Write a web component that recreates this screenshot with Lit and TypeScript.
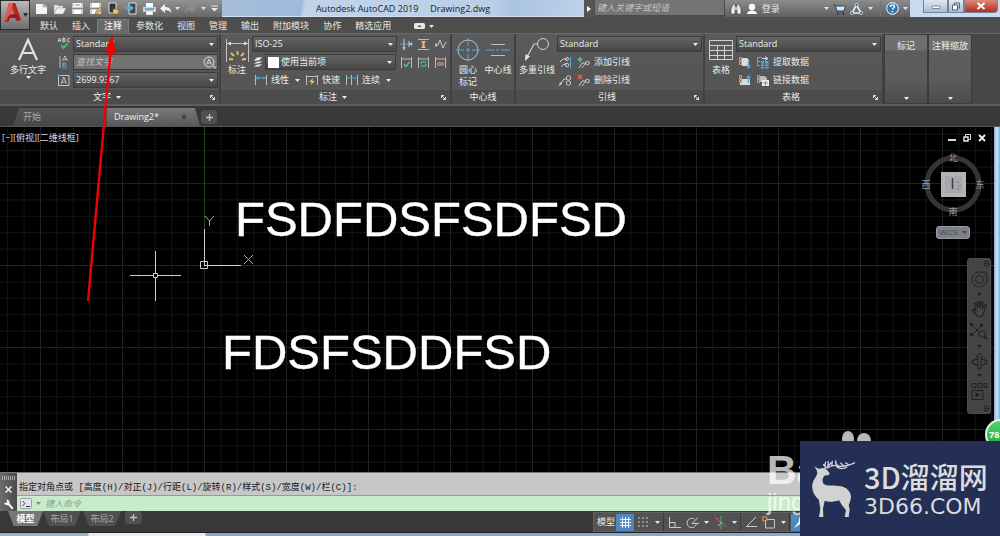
import { LitElement, html, svg, css, TemplateResult } from "lit";
import { customElement, property } from "lit/decorators.js";

type Glyph = { w: number; h: number; art: TemplateResult };

const g = (w: number, h: number, art: TemplateResult): Glyph => ({ w, h, art });

// Line art for every toolbar symbol, keyed by name.
const glyphs: Record<string, Glyph> = {
  file: g(13, 12, svg`<path d="M1 1h7l4 3v7H1z" fill="#f4f4f4"/><path d="M8 1v3h4" fill="#bbb" stroke="#999" stroke-width=".5"/>`),
  open: g(13, 12, svg`<path d="M1 11V2h4l1 1h4v2H4z" fill="#ddd"/><path d="M4 5h9l-3 6H1z" fill="#f2f2f2" stroke="#888" stroke-width=".4"/>`),
  save: g(13, 13, svg`<path d="M1 1h11v11H1z" fill="#ccc"/><path d="M3 1h7v4H3z" fill="#fff"/><path d="M3 8h7v4H3z" fill="#fff"/><path d="M4 3h5M1 6.5h11" stroke="#888"/>`),
  saveas: g(13, 13, svg`<path d="M1 1h11v11H1z" fill="#ccc"/><path d="M3 1h7v4H3zM3 8h4v4H3z" fill="#fff"/><path d="M1 6.5h11" stroke="#888"/><path d="M6 12l1-3 4-4 2 2-4 4z" fill="#e9a95c" stroke="#7c4b1e" stroke-width=".4"/>`),
  mobileopen: g(13, 13, svg`<path d="M2 1h7v10H2z" fill="#333" stroke="#ddd"/><path d="M6 12V7h3l1 1h2l-1 4z" fill="#f4c15e" stroke="#6b4a12" stroke-width=".4"/>`),
  mobilesave: g(13, 13, svg`<path d="M4 1h7v11H4z" fill="#444" stroke="#ddd"/><path d="M1 5h4V3l4 3-4 3V7H1z" fill="#45b1f0"/>`),
  print: g(13, 12, svg`<path d="M3 0h7v4H3z" fill="#fff"/><path d="M0 4h13v5H0z" fill="#cfd5da"/><path d="M2 5h9v2H2z" fill="#55b0e8"/><path d="M3 8h7v4H3z" fill="#fff" stroke="#777" stroke-width=".4"/>`),
  undo: g(13, 11, svg`<path d="M6 1v3c4 0 6 2 6.500 6C11 8 9 7 6 7v3L1 5.500z" fill="#f0f0f0"/>`),
  redo: g(13, 11, svg`<path d="M7 1v3C3 4 1 6 .500 10 2 8 4 7 7 7v3l5-4.500z" fill="#8c8c8c"/>`),
  caret: g(5, 3, svg`<path d="M0 0h5L2.500 3z" fill="currentColor"/>`),
  custom: g(7, 7, svg`<path d="M0 1h7" stroke="currentColor"/><path d="M0 3h7L3.500 6.500z" fill="currentColor"/>`),
  play: g(4, 6, svg`<path d="M0 0l4 3-4 3z" fill="#fff"/>`),
  binoc: g(12, 12, svg`<path d="M1 11V6l2-5h2v10zM11 11V6L9 1H7v10z" fill="#eee" stroke="#3a3a3a" stroke-width=".6"/><path d="M5 4h2v3H5z" fill="#ccc"/>`),
  user: g(12, 12, svg`<circle cx="6" cy="4" r="3.200" fill="#fafafa"/><path d="M1 11c0-2 2-3 4-3.500h2c2 .500 4 1.500 4 3.500z" fill="#fafafa"/>`),
  cart: g(13, 12, svg`<path d="M0 2h2l2 6h7l1.500-5H3" fill="#d7e8f5" stroke="#27425c"/><circle cx="5" cy="10.500" r="1.200" fill="#27425c"/><circle cx="10" cy="10.500" r="1.200" fill="#27425c"/>`),
  app: g(13, 12, svg`<path d="M6.500 2l4.500 8H2z" fill="none" stroke="#e3edf5" stroke-width="1.600"/><circle cx="6.500" cy="2" r="1.600" fill="#42688d" stroke="#fff" stroke-width=".6"/><circle cx="2" cy="10" r="1.600" fill="#42688d" stroke="#fff" stroke-width=".6"/><circle cx="11" cy="10" r="1.600" fill="#42688d" stroke="#fff" stroke-width=".6"/>`),
  help: g(13, 13, svg`<circle cx="6.500" cy="6.500" r="5.800" fill="#2f78bd" stroke="#fff"/><path d="M4.500 5c0-3 4-2.500 4-.5 0 1.500-2 1.500-2 3M6.500 9v1.200" fill="none" stroke="#fff" stroke-width="1.400"/>`),
  wmin: g(10, 8, svg`<path d="M1 4h8v2.500H1z" fill="#fff" stroke="#56616f" stroke-width=".7"/>`),
  wmax: g(10, 9, svg`<path d="M3.500 1h5v5h-5z" fill="none" stroke="#56616f"/><path d="M1.500 3h5v5h-5z" fill="#fff" stroke="#56616f"/>`),
  wclose: g(10, 8, svg`<path d="M1.500 1l7 6M8.500 1l-7 6" stroke="#fff" stroke-width="2"/>`),
  panelview: g(11, 6, svg`<rect width="11" height="6" rx="1.500" fill="#e6e6e6"/><path d="M3.500 4h4L5.500 2z" fill="#444"/>`),
  mtext: g(24, 26, svg`<path d="M3 23L12 3l9 20M6.500 16h11" fill="none" stroke="#e0e0e0" stroke-width="2.200"/>`),
  abc: g(14, 14, svg`<path d="M1 5l1.500-4L4 5M1.500 3.500h2M6 1v4h1.500q1.500-1 0-2H6V1h1.500q1 1 0 2M13 1.500q-3-1-3 1.500t3 1.500" fill="none" stroke="#ddd" stroke-width=".8"/><path d="M4 8l2.500 3L11 6" fill="none" stroke="#40c87a" stroke-width="1.800"/>`),
  alignab: g(10, 14, svg`<path d="M1 1v12" stroke="#bbb"/><path d="M3.500 6L6 1l2.500 5M4.500 4.500h3" fill="none" stroke="#ccc" stroke-width=".9"/><path d="M4 8v5h2.500q2-1.300 0-2.600H4V8h2q2 1 0 2.400" fill="none" stroke="#4aaeea"/>`),
  boxa: g(13, 13, svg`<path d="M1.500 2v9.500H12V1.500H3" fill="none" stroke="#c5c5c5"/><path d="M4 10l2.800-7L9.500 10M5 8h3.500" fill="none" stroke="#ccc" stroke-width=".9"/><circle cx="1.500" cy="1.500" r="1" fill="#4aaeea"/>`),
  find: g(13, 13, svg`<circle cx="6" cy="6" r="5" fill="none" stroke="#ddd"/><path d="M3.500 8.500L6 3l2.500 5.500M4.500 7h3" fill="none" stroke="#ddd" stroke-width=".9"/><path d="M10 9.500l2.500 3" stroke="#e7b46b" stroke-width="1.600"/>`),
  dim: g(25, 25, svg`<path d="M1.500 1v23M23.500 1v23M2 5.500h21" fill="none" stroke="#c2c2c2"/><path d="M2 5.500l4-2v4zM23 5.500l-4-2v4z" fill="#ddd"/><path d="M12.500 17v-4M9 18l-3-3M16 18l3-3M8 21.500l-4-.5M17 21.500l4-.5" stroke="#f1bd62" stroke-width="1.800"/>`),
  layers: g(12, 12, svg`<path d="M1 5l4-4h6L7 5zM1 8l4-3h6L7 8zM1 11l4-3h6l-4 3z" fill="#e5e5e5" stroke="#555" stroke-width=".7"/>`),
  d1: g(13, 13, svg`<path d="M0 6h13" stroke="#4aaeea"/><path d="M4 1v11M9 3v6" stroke="#ccc"/><path d="M2.500 9L4 12l1.500-3zM9 6l3-1.700v3.400z" fill="#ccc"/>`),
  d2: g(13, 13, svg`<path d="M1 1.500h11M1 11.500h11" stroke="#bbb"/><path d="M4 3h5L7.500 5v3L9 10H4l1.500-2V5z" fill="#f1bd62"/>`),
  d3: g(13, 13, svg`<path d="M1 7h3l2-5 3 8 3-6M2 5v4" fill="none" stroke="#ccc"/>`),
  d4: g(13, 13, svg`<path d="M1.500 1v11M11.500 1v11M2 3h9" stroke="#bbb"/><path d="M4 8l2 2.500L9.500 6" fill="none" stroke="#40c87a" stroke-width="1.500"/>`),
  d5: g(13, 13, svg`<path d="M1.500 1v11M11.500 1v11M2 3h9" stroke="#bbb"/><path d="M4 8c0-3 4-3 5-1M9 8c0 3-4 3-5 1" fill="none" stroke="#40c87a" stroke-width="1.200"/>`),
  d6: g(13, 13, svg`<path d="M1.500 1v11M11.500 1v11M2 3h9" stroke="#bbb"/><circle cx="5" cy="8" r="1.500" fill="none" stroke="#ec9a66"/><circle cx="8" cy="8" r="1.500" fill="none" stroke="#ec9a66"/>`),
  linear: g(12, 12, svg`<path d="M.5 1v10M11.500 1v10" stroke="#bbb"/><path d="M1 4h10" stroke="#4aaeea"/><path d="M1 4l2.500-1.500v3zM11 4L8.500 2.500v3z" fill="#4aaeea"/>`),
  quick: g(12, 12, svg`<path d="M.5 1v10M11.500 1v10M1 2.500h10" stroke="#bbb"/><path d="M7 4L3 8h2.500L5 11l4-4H6.500z" fill="#f1bd62"/>`),
  cont: g(12, 12, svg`<path d="M.5 1v10M5.500 1v10M11.500 1v10" stroke="#bbb"/><path d="M1 4h10" stroke="#4aaeea"/>`),
  cmark: g(24, 24, svg`<circle cx="12" cy="12" r="10" fill="none" stroke="#bdbdbd"/><path d="M12 0v8M12 10v4M12 16v8M0 12h8M10 12h4M16 12h8" stroke="#4aaeea"/>`),
  cline: g(24, 24, svg`<path d="M5 6.500h14M5 17.500h14" stroke="#bdbdbd"/><path d="M0 12h8M10 12h3M15 12h9" stroke="#4aaeea"/>`),
  mleader: g(26, 26, svg`<circle cx="19" cy="7" r="5.500" fill="none" stroke="#d0d0d0"/><path d="M13.500 7H10L3 20" fill="none" stroke="#d0d0d0" stroke-width="1.200"/><path d="M1 24l.5-7 4.500 2.500z" fill="#e0e0e0"/>`),
  l1: g(13, 13, svg`<path d="M1 6l3-3h4M2 11l3-3h3" fill="none" stroke="#ccc"/><circle cx="8" cy="3" r="1.500" fill="none" stroke="#ccc"/><circle cx="8" cy="9" r="1.800" fill="none" stroke="#ccc"/><path d="M11.500 1v11" stroke="#4aaeea"/>`),
  l2: g(13, 13, svg`<path d="M1 11l4-6h3" fill="none" stroke="#ccc"/><circle cx="9.500" cy="4" r="2.200" fill="none" stroke="#ccc"/><circle cx="9.500" cy="9" r="2.200" fill="none" stroke="#ccc"/><path d="M0 12l1-4 2 2z" fill="#ccc"/>`),
  ladd: g(13, 13, svg`<path d="M2 12l3-5h4M5 12l3-4" fill="none" stroke="#ccc"/><circle cx="10.500" cy="7" r="1.800" fill="none" stroke="#ccc"/><path d="M3 1v5M.5 3.500h5" stroke="#3fd473" stroke-width="1.600"/>`),
  ldel: g(13, 13, svg`<path d="M2 12l3-5h4M5 12l3-4" fill="none" stroke="#ccc"/><circle cx="10.500" cy="7" r="1.800" fill="none" stroke="#ccc"/><path d="M1 1l4 4M5 1L1 5" stroke="#f2605a" stroke-width="1.500"/>`),
  table: g(24, 22, svg`<path d="M.5 1.500h23v19H.5zM1 6.500h22M1 11.500h22M1 16.500h22M8.500 6v14M15.500 6v14" fill="none" stroke="#cfcfcf"/>`),
  t1: g(13, 13, svg`<path d="M4 2h5l2 2v6H4z" fill="#ddd"/><path d="M1.500 1.500h2v3h-2zM1.500 5.500h2v3h-2z" fill="none" stroke="#dc9c6e"/><path d="M10.500 5v6" stroke="#4aaeea" stroke-width="1.500"/><path d="M8 9.500h5L10.500 13z" fill="#4aaeea"/>`),
  t2: g(13, 13, svg`<path d="M5 5h7.500v7.500H5z" fill="#4aaeea"/><path d="M5 8h7.500M5 10.500h7.500M8.500 5v7.500" stroke="#505050" stroke-width=".8"/><path d="M1 1.500h5M1.500 1v8.500H4M1 5.500h3" fill="none" stroke="#4aaeea"/><path d="M6 2.500h5M9 .5l3 2-3 2" fill="none" stroke="#bfe0f5"/>`),
  t3: g(13, 13, svg`<path d="M4 5h8v6H2V8z" fill="#ddd"/><path d="M1.500 1.500h2v3h-2zM1.500 5.500h2v3h-2z" fill="none" stroke="#dc9c6e"/><path d="M10.500 3v6" stroke="#4aaeea" stroke-width="1.500"/><path d="M8 4h5L10.500 1z" fill="#4aaeea"/>`),
  t4: g(13, 13, svg`<path d="M4 2h5l2 2v4H4z" fill="#bbb"/><path d="M6 6h7v6H6z" fill="#eee"/><path d="M7 9h5M9.500 7v5" stroke="#777" stroke-width=".8"/><path d="M1.500 1.500h2v3h-2zM1.500 5.500h2v3h-2z" fill="none" stroke="#dc9c6e"/>`),
  launch: g(5, 5, svg`<path d="M0 .5h3M.5 0v3M1 1l3 3" stroke="#ddd" fill="none"/><path d="M5 1.500V5H1.500z" fill="#ddd"/>`),
  cross: g(6, 6, svg`<path d="M1 1l4 4M5 1L1 5" stroke="currentColor" stroke-width="1.100"/>`),
  dock: g(7, 7, svg`<path d="M.5.5l6 6M6.500.5l-6 6" stroke="currentColor" stroke-width="1.500"/>`),
  plus: g(7, 7, svg`<path d="M3.500 0v7M0 3.500h7" stroke="#c4c4c4" stroke-width="1.300"/>`),
  vmin: g(8, 8, svg`<path d="M0 6h8" stroke="#ddd" stroke-width="2"/>`),
  vmax: g(8, 8, svg`<path d="M2.500 2.500v-2h5v5h-2" fill="none" stroke="#ddd"/><path d="M1 3h4v4H1z" fill="none" stroke="#eee" stroke-width="1.400"/>`),
  vclose: g(8, 8, svg`<path d="M1 1l6 6M7 1L1 7" stroke="#eee" stroke-width="1.900"/>`),
  wheel: g(17, 17, svg`<circle cx="8.500" cy="8.500" r="7.500" fill="none" stroke="#242424"/><circle cx="8.500" cy="8.500" r="4" fill="none" stroke="#242424"/><path d="M8.500 1H16v7" fill="none" stroke="#29303c"/>`),
  hand: g(17, 18, svg`<path d="M6 16c-2-3-3-4-5-6 1-1.500 3 0 4 1L3.500 4c1-1 2 0 2.200 1L7 8l-.3-6c1-1.300 2-.5 2 .5L9 8l1.500-6c1.200-.8 1.800.2 1.500 1.200L11.200 9l2.300-4c1-.5 1.800.3 1.300 1.300L13 12l-2 4.500z" fill="none" stroke="#202020" stroke-width="1.100"/>`),
  zoomx: g(18, 18, svg`<path d="M2 2l9 9M12 2L2 12" stroke="#202020"/><path d="M0 0h3v3H0zM10 1h3v3h-3zM0 10h3v3H0z" fill="#202020"/><circle cx="12" cy="11" r="3.200" fill="#444" stroke="#202020"/><path d="M14.500 13.500L17 16" stroke="#202020" stroke-width="2"/>`),
  orbit: g(17, 17, svg`<ellipse cx="8.500" cy="9" rx="7.500" ry="3" fill="none" stroke="#202020" stroke-width="1.200"/><path d="M7 16V4H5.500L8.500 0l3 4H10v12z" fill="#444" stroke="#202020"/>`),
  motion: g(17, 19, svg`<path d="M1 1.500h4v4H1zM7 1.500h4v4H7zM13 1.500h3v4h-3zM1 8.500h11v9H1z" fill="none" stroke="#202020"/><path d="M4.500 10.500l5 2.500-5 2.500z" fill="#202020"/>`),
  ring: g(7, 7, svg`<circle cx="3.500" cy="3.500" r="2.600" fill="none" stroke="#202020"/><path d="M2 3.500h3" stroke="#202020"/>`),
  wrench: g(11, 11, svg`<path d="M1 3.500A3 3 0 0 0 5 6l4 4.500 1.500-1.500L6.500 4.500A3 3 0 0 0 3.500.5L4 3 2.800 4z" fill="#f2f2f2"/>`),
  prompt: g(12, 11, svg`<rect x=".5" y=".5" width="11" height="10" rx="1" fill="#e6e6ee" stroke="#9aa0a8"/><path d="M2.500 3l2.500 2.500L2.500 8M6 8.500h4" fill="none" stroke="#333"/>`),
  grid: g(13, 13, svg`<path d="M3.500 1v11M6.500 1v11M9.500 1v11M1 3.500h11M1 6.500h11M1 9.500h11" stroke="#fff" stroke-width=".9"/>`),
  dots: g(12, 12, svg`<path d="M1 2h2M5 2h2M9 2h2M1 6h2M5 6h2M9 6h2M1 10h2M5 10h2M9 10h2" stroke="#ccc" stroke-width="1.200"/>`),
  ortho: g(13, 13, svg`<path d="M1.500 1v10.500H13M2 6.500h5V11" fill="none" stroke="#ccc"/>`),
  polar: g(13, 13, svg`<path d="M10.500 7a4.700 4.700 0 1 1-2-3.900M6 7.500h7M6 7.500l6-6" fill="none" stroke="#ccc"/>`),
  iso: g(13, 13, svg`<path d="M1 1l11 10" stroke="#d9605a"/><path d="M7 0v13" stroke="#4fae69"/><path d="M4 10l4-4" stroke="#bbb"/>`),
  angle: g(13, 12, svg`<path d="M11 1L1.500 10.500H12" fill="none" stroke="#ccc"/>`),
  osnap: g(14, 13, svg`<path d="M3 3.500h9.500v8.500H3.500V4" fill="none" stroke="#c9c9c9"/><path d="M.8.8h4v4h-4z" fill="#555" stroke="#e29a5c"/>`),
  star: g(12, 13, svg`<path d="M6 0l1.500 6 4.500 5-4-1.500L6 8l-2 1.500L0 12l4.500-6z" fill="#fff"/>`),
};

const icon = (name: string) => {
  const i = glyphs[name];
  return html`<svg class="ico" width=${i.w} height=${i.h} viewBox="0 0 ${i.w} ${i.h}" aria-hidden="true">${i.art}</svg>`;
};

const base = css`
  * { box-sizing: border-box; }
  button, input, select, a { font: inherit; color: inherit; margin: 0; }
  button { border: 0; padding: 0; background: none; display: flex; align-items: center; justify-content: center; white-space: nowrap; }
  .ico { display: block; flex: none; }
`;

@customElement("title-bar")
class TitleBar extends LitElement {
  static styles = [base, css`
    :host { display: grid; grid-template-columns: 30px 1fr; background: #4e4e4e; color: #e6e6e6; height: 33px; }
    .logo { grid-row: 1 / 3; height: 30px; border: 1px solid #2b2b2b; background: linear-gradient(#b9b9b9, #6d6d6d); color: #333; justify-content: flex-start; }
    .bar { display: flex; height: 17px; overflow: hidden; }
    .quick { display: flex; align-items: center; width: 192px; padding-left: 3px; background: linear-gradient(#929292, #686868); }
    .quick button { width: 18px; height: 17px; }
    .quick .thin { width: 8px; }
    .quick .wide { width: 15px; }
    .caption { flex: 1; display: flex; justify-content: center; gap: 12px; background: linear-gradient(100deg, #a6bedb 0, #9fb9da 22%, #c0d3ea 23%, #b9cfe9 75%, #a9c3e1 80%, #bfd2ea); color: #1b1b1b; line-height: 17px; border-bottom: 1px solid #d5e0ee; }
    .play { width: 10px; background: #555; }
    .query { width: 131px; height: 16px; border: 1px solid #4b4b4b; border-top: 0; background: #747474; font-style: italic; padding: 0 2px; }
    .query::placeholder { color: #c3c3c3; opacity: 1; }
    .tools { display: flex; align-items: center; width: 185px; padding-left: 2px; background: linear-gradient(#8c8c8c, #5f5f5f); }
    .tools button { height: 17px; width: 18px; }
    .tools .login { width: 37px; gap: 4px; margin-right: 41px; }
    .tools .thin { width: 9px; }
    .tools .help { margin-left: 5px; border-left: 1px solid #777; width: 22px; padding-left: 4px; }
    .win { display: flex; width: 90px; padding: 0 2px 4px 13px; background: #c9dbee; }
    .win button { width: 25px; border: 1px solid #72839a; border-top: 0; background: linear-gradient(#dfe8f2, #a9bbcf); }
    .win .mid { width: 16px; }
    .win .close { width: 34px; background: linear-gradient(#dc8a7c, #b72b1b); border-radius: 0 0 4px 0; }
    .tabs { display: flex; align-items: flex-end; padding-left: 3px; height: 16px; }
    .tab { padding: 0 7px; height: 14px; line-height: 13px; text-decoration: none; white-space: nowrap; }
    .on { background: #6a6a6a; border: 1px solid #7b7b7b; border-bottom: 0; padding: 0 6px; line-height: 12px; color: #fff; }
    .view { height: 14px; gap: 4px; margin-left: 16px; }
  `];
  render() {
    const quick = [["file", "新建"], ["open", "打开"], ["save", "保存"], ["saveas", "另存为"], ["mobileopen", "从移动设备打开"], ["mobilesave", "保存到移动设备"], ["print", "打印"]];
    const tabs = ["默认", "插入", "注释", "参数化", "视图", "管理", "输出", "附加模块", "协作", "精选应用"];
    return html`
      <button class="logo" aria-label="应用程序菜单">
        <svg class="ico" width="28" height="28" viewBox="0 0 28 28">
          <path d="M3 21L8 2h6l6 17-4 1-2-5-5 1-2 5z" fill="#c62a28"/>
          <path d="M8 2h4l-2 8-3 7-4 4z" fill="#e65a50"/><path d="M11 7l2 6-4 1z" fill="#8f8f8f"/>
          <path d="M6 17l3-3 6-1 5 6-4 1-2-3-5 0-2 4z" fill="#a3191b"/><path d="M12 2h2l6 17-2 .5z" fill="#b01f20"/>
          <path d="M22 12h5l-2.500 4z" fill="#2c2c30"/>
        </svg>
      </button>
      <div class="bar">
        <div class="quick">
          ${quick.map(([i, t]) => html`<button aria-label=${t}>${icon(i)}</button>`)}
          <button class="wide" aria-label="放弃">${icon("undo")}</button><button class="thin" aria-label="放弃列表">${icon("caret")}</button>
          <button aria-label="重做">${icon("redo")}</button><button class="thin" aria-label="重做列表">${icon("caret")}</button>
          <button class="wide" aria-label="自定义">${icon("custom")}</button>
        </div>
        <div class="caption"><span>Autodesk AutoCAD 2019</span><span>Drawing2.dwg</span></div>
        <button class="play" aria-label="展开">${icon("play")}</button>
        <input class="query" type="text" aria-label="搜索" placeholder="键入关键字或短语">
        <div class="tools">
          <button aria-label="查找">${icon("binoc")}</button>
          <button class="login">${icon("user")}登录</button>
          <button class="thin" aria-label="登录菜单">${icon("caret")}</button>
          <button aria-label="商店">${icon("cart")}</button>
          <button aria-label="应用">${icon("app")}</button><button class="thin" aria-label="应用菜单">${icon("caret")}</button>
          <button class="help" aria-label="帮助">${icon("help")}</button><button class="thin" aria-label="帮助菜单">${icon("caret")}</button>
        </div>
        <div class="win">
          <button aria-label="最小化">${icon("wmin")}</button><button class="mid" aria-label="还原">${icon("wmax")}</button><button class="close" aria-label="关闭">${icon("wclose")}</button>
        </div>
      </div>
      <nav class="tabs">
        ${tabs.map((t) => html`<a href="#" class=${t === "注释" ? "tab on" : "tab"}>${t}</a>`)}
        <button class="view" aria-label="功能区显示">${icon("panelview")}${icon("caret")}</button>
      </nav>`;
  }
}

@customElement("ribbon-panel")
class RibbonPanel extends LitElement {
  @property() label = "";
  @property({ type: Boolean }) menu = false;
  @property({ type: Boolean }) launcher = false;
  static styles = [base, css`
    :host { display: flex; flex-direction: column; flex: none; background: linear-gradient(#5b5b5b, #555 60%, #5a5a5a); border-right: 2px solid #414141; }
    .body { display: flex; flex: 1; min-height: 0; padding: 2px 1px 0; }
    .foot { display: flex; align-items: center; height: 14px; padding: 0 4px; background: #4c4c4c; }
    .foot span { flex: 1; display: flex; gap: 5px; align-items: center; justify-content: center; }
  `];
  render() {
    return html`<div class="body"><slot></slot></div>
      <div class="foot"><span>${this.label}${this.menu ? icon("caret") : ""}</span>${this.launcher ? html`<button aria-label="${this.label}设置">${icon("launch")}</button>` : ""}</div>`;
  }
}

@customElement("cad-ribbon")
class CadRibbon extends LitElement {
  static styles = [base, css`
    :host { display: flex; height: 73px; background: #484848; color: #ececec; border-top: 1px solid #6a6a6a; border-bottom: 2px solid #5e5e5e; }
    .big { flex-direction: column; justify-content: flex-start; line-height: 12px; }
    .w30 { width: 30px; } .w40 { width: 40px; } .w54 { width: 54px; }
    .big .slot { display: flex; align-items: center; height: 28px; }
    .rows { display: flex; flex-direction: column; gap: 2px; }
    .row { display: flex; align-items: center; height: 16px; gap: 1px; }
    .tight { gap: 0; }
    .pick { display: flex; align-items: center; position: relative; width: 145px; height: 16px; border: 1px solid #3c3c3c; background: linear-gradient(#636363, #474747); }
    .pick.short { width: 131px; }
    .pick select { appearance: none; border: 0; background: none; width: 100%; height: 14px; padding: 0 12px 0 2px; line-height: 14px; outline: 0; }
    .pick .ico { position: absolute; right: 3px; pointer-events: none; }
    .chip { width: 11px; height: 11px; margin-left: 2px; background: #fff; flex: none; }
    .search { background: #727272; padding-right: 1px; }
    .search input { flex: 1; min-width: 0; border: 0; background: none; font-style: italic; padding: 0 2px; }
    .search input::placeholder { color: #bdbdbd; opacity: 1; }
    .search .ico { position: static; }
    .cmd { gap: 4px; height: 16px; padding: 0 2px; }
    .tight .cmd { padding: 0 3px; }
    .tool { width: 17px; height: 16px; }
    .icons { display: grid; grid-template-columns: repeat(3, 17px); grid-auto-rows: 16px; gap: 2px 0; margin-left: 1px; }
    .icons button { height: 16px; }
    .slim { width: 44px; background: linear-gradient(#6e6e6e 0, #6e6e6e 15px, #5d5d5d 16px, #5b5b5b 45px, #4c4c4c); border: 1px solid #3b3b3b; display: flex; flex-direction: column; justify-content: space-between; align-items: center; padding: 5px 0 3px; flex: none; }
  `];
  big(i: string, t: string, w: string, more: unknown = "") {
    return html`<button class="big ${w}"><span class="slot">${icon(i)}</span><span>${t}</span>${more}</button>`;
  }
  pick(label: string, value: string, cls = "pick", chip: unknown = "") {
    return html`<div class=${cls}>${chip}<select aria-label=${label}><option>${value}</option></select>${icon("caret")}</div>`;
  }
  tool(i: string, t: string) {
    return html`<button class="tool" aria-label=${t}>${icon(i)}</button>`;
  }
  render() {
    return html`
      <ribbon-panel label="文字" menu launcher>
        ${this.big("mtext", "多行文字", "w54", icon("caret"))}
        <div class="rows">
          <div class="row">${this.tool("abc", "拼写检查")}${this.pick("文字样式", "Standard")}</div>
          <div class="row">${this.tool("alignab", "对齐文字")}<div class="pick search"><input type="text" aria-label="查找文字" placeholder="查找文字"><button aria-label="查找">${icon("find")}</button></div></div>
          <div class="row">${this.tool("boxa", "注释文字")}${this.pick("文字高度", "2699.9367")}</div>
        </div>
      </ribbon-panel>
      <ribbon-panel label="标注" menu launcher>
        ${this.big("dim", "标注", "w30")}
        <div class="rows">
          <div class="row">${this.pick("标注样式", "ISO-25")}</div>
          <div class="row">${icon("layers")}${this.pick("标注图层", "使用当前项", "pick short", html`<span class="chip"></span>`)}</div>
          <div class="row tight">
            <button class="cmd">${icon("linear")}线性</button><button class="cmd" aria-label="线性菜单">${icon("caret")}</button>
            <button class="cmd">${icon("quick")}快速</button>
            <button class="cmd">${icon("cont")}连续</button><button class="cmd" aria-label="连续菜单">${icon("caret")}</button>
          </div>
        </div>
        <div class="icons">
          ${[["d1", "打断"], ["d2", "调整间距"], ["d3", "折弯"], ["d4", "检验"], ["d5", "更新"], ["d6", "重新关联"]].map(([i, t]) => html`<button aria-label=${t}>${icon(i)}</button>`)}
        </div>
      </ribbon-panel>
      <ribbon-panel label="中心线">
        ${this.big("cmark", "圆心", "w30", html`<span>标记</span>`)}
        ${this.big("cline", "中心线", "w30")}
      </ribbon-panel>
      <ribbon-panel label="引线" launcher>
        ${this.big("mleader", "多重引线", "w40")}
        <div class="rows">
          <div class="row">${this.pick("引线样式", "Standard")}</div>
          <div class="row">${this.tool("l1", "对齐")}<button class="cmd">${icon("ladd")}添加引线</button></div>
          <div class="row">${this.tool("l2", "合并")}<button class="cmd">${icon("ldel")}删除引线</button></div>
        </div>
      </ribbon-panel>
      <ribbon-panel label="表格" launcher>
        ${this.big("table", "表格", "w30")}
        <div class="rows">
          <div class="row">${this.pick("表格样式", "Standard")}</div>
          <div class="row">${this.tool("t1", "下载")}<button class="cmd">${icon("t2")}提取数据</button></div>
          <div class="row">${this.tool("t3", "上载")}<button class="cmd">${icon("t4")}链接数据</button></div>
        </div>
      </ribbon-panel>
      <button class="slim">标记${icon("caret")}</button>
      <button class="slim">注释缩放${icon("caret")}</button>`;
  }
}

@customElement("drawing-view")
class DrawingView extends LitElement {
  static styles = [base, css`
    :host { display: flex; flex: 1; min-height: 0; background: #000; color: #ccc; border-top: 1px solid #555; }
    .view { flex: 1; position: relative; overflow: hidden; }
    .sheet { position: absolute; inset: 0; width: 100%; height: 100%; }
    .edge { width: 6px; background: linear-gradient(90deg, #86a9cb, #c5dcf3 40%, #aecdeb 80%, #39b6d8); }
    .big { font: 49px "Liberation Sans", Arial, sans-serif; fill: #fff; stroke: #fff; stroke-width: .4px; }
    .mode { position: absolute; left: 2px; top: 4px; line-height: 13px; color: #d8d8d8; }
    .win { position: absolute; right: 8px; top: 7px; display: flex; gap: 7px; }
    .compass { position: absolute; right: 8px; top: 23px; width: 66px; height: 70px; }
    .dir { fill: #9c9c9c; text-anchor: middle; }
    .wcs { position: absolute; right: 24px; top: 99px; width: 34px; height: 13px; border-radius: 3px; background: #7e8087; border: 1px solid #999ba1; color: #4a4c52; font: 8px "Liberation Sans", sans-serif; gap: 4px; }
    .nav { position: absolute; right: 3px; top: 131px; width: 24px; height: 156px; border-radius: 3px; background: #444; display: flex; flex-direction: column; align-items: center; justify-content: space-between; padding: 1px 0; color: #202020; border: 1px solid #4d4d4d; }
    .nav .end { align-self: flex-end; }
  `];
  render() {
    const nav = [["wheel", "全导航控制盘"], ["caret", "控制盘菜单"], ["hand", "平移"], ["zoomx", "范围缩放"], ["caret", "缩放菜单"], ["orbit", "动态观察"], ["caret", "观察菜单"], ["motion", "ShowMotion"]];
    return html`
      <div class="view">
        <svg class="sheet">
          <defs>
            <pattern id="cells" x="204" y="138" width="82" height="82" patternUnits="userSpaceOnUse">
              <path d="M16.900 0v82M33.300 0v82M49.700 0v82M66.100 0v82M0 16.900h82M0 33.300h82M0 49.700h82M0 66.100h82" stroke="#121318"/>
              <path d="M.5 0v82M0 .5h82" stroke="#20212a"/>
            </pattern>
          </defs>
          <rect width="100%" height="100%" fill="url(#cells)"/>
          <line x1="204.500" y1="0" x2="204.500" y2="102" stroke="#1d4a1d"/>
          <line x1="240" y1="138.500" x2="100%" y2="138.500" stroke="#5a1c1f"/>
          <g fill="none" stroke="#cfcfcf">
            <path d="M204.500 102v37M204 138.500h37M200.500 134.500h7v7h-7z"/>
            <path d="M205 89l4.500 5 4.500-5M209.500 94v5M244 128l9 9M253 128l-9 9" stroke="#aaa"/>
            <path d="M155.500 124v22M155.500 151v23M130 148.500h23M158 148.500h23M153.500 146.500h4v4h-4z"/>
          </g>
          <text class="big" x="235" y="109">FSDFDSFSDFSD</text>
          <text class="big" x="222" y="242">FDSFSDDFSD</text>
        </svg>
        <div class="mode">[−][俯视][二维线框]</div>
        <div class="win"><button aria-label="最小化视图">${icon("vmin")}</button><button aria-label="还原视图">${icon("vmax")}</button><button aria-label="关闭视图">${icon("vclose")}</button></div>
        <svg class="compass" viewBox="0 0 66 70">
          <circle cx="33" cy="34" r="26" fill="none" stroke="#343434" stroke-width="5"/>
          <rect x="21" y="22" width="25" height="25" fill="#b3b3b3"/><rect x="25" y="26" width="17" height="17" fill="#a6a8ac"/>
          <path d="M32.500 28v11" stroke="#3d3f46" stroke-width="1.500"/><path d="M37 32h2M39 36h2M37 39h2" stroke="#66758c"/>
          <text class="dir" x="33" y="11">北</text><text class="dir" x="6" y="38">西</text><text class="dir" x="60" y="38">东</text><text class="dir" x="33" y="65">南</text>
        </svg>
        <button class="wcs">WCS${icon("caret")}</button>
        <div class="nav">
          <button class="end" aria-label="关闭导航栏">${icon("ring")}</button>
          ${nav.map(([i, t]) => html`<button aria-label=${t}>${icon(i)}</button>`)}
          <button class="end" aria-label="导航栏设置">${icon("ring")}</button>
        </div>
      </div>
      <div class="edge"></div>`;
  }
}

@customElement("command-line")
class CommandLine extends LitElement {
  static styles = [base, css`
    :host { display: flex; height: 39px; border-top: 1px solid #777; background: #c7c7c7; color: #161616; }
    .grip { width: 17px; background: linear-gradient(90deg, #6c6c6c, #4b4b4b); display: flex; flex-direction: column; align-items: center; justify-content: space-between; padding: 3px 0 1px; color: #f2f2f2; }
    .dots { width: 13px; height: 4px; background: repeating-linear-gradient(90deg, #aaa 0 1px, transparent 1px 2px); }
    .text { flex: 1; display: flex; flex-direction: column; }
    .log { flex: 1; display: flex; align-items: flex-end; padding: 0 2px; line-height: 13px; font-family: "Liberation Mono", "Noto Sans CJK SC", monospace; }
    .entry { display: flex; align-items: center; height: 16px; border-top: 1px solid #999; background: #c8ebcb; padding-left: 3px; gap: 4px; color: #7b8b7d; }
    .entry input { flex: 1; border: 0; background: none; outline: 0; padding: 0; font-style: italic; }
    .entry input::placeholder { color: #8ba18d; opacity: 1; }
  `];
  render() {
    return html`
      <div class="grip"><span class="dots"></span><button aria-label="关闭">${icon("dock")}</button><button aria-label="自定义">${icon("wrench")}</button></div>
      <div class="text">
        <div class="log">指定对角点或 [高度(H)/对正(J)/行距(L)/旋转(R)/样式(S)/宽度(W)/栏(C)]:</div>
        <div class="entry"><button aria-label="最近的命令">${icon("prompt")}</button>${icon("caret")}<input type="text" aria-label="命令" placeholder="键入命令"></div>
      </div>`;
  }
}

@customElement("status-strip")
class StatusStrip extends LitElement {
  static styles = [base, css`
    :host { display: flex; height: 22px; background: #383838; color: #a8a8a8; border-bottom: 1px solid #222; }
    .sheets { display: flex; padding-left: 8px; }
    .sheet { height: 15px; width: 38px; background: #505050; clip-path: polygon(0 0, 100% 0, 84% 100%, 16% 100%); }
    .on { width: 35px; background: #777; color: #fff; font-weight: bold; }
    .add { width: 17px; height: 13px; margin-left: 4px; background: #505050; border-radius: 3px; }
    .gap { width: 2px; }
    .tools { display: flex; align-items: center; width: 407px; height: 20px; margin: 1px 0 0 auto; background: #525252; color: #e8e8e8; padding-left: 2px; border: 1px solid #626262; border-right: 0; }
    .tools button { width: 18px; height: 17px; }
    .tools .label { width: 20px; }
    .tools .thin { width: 10px; }
    .tools .lit { background: #4f87bf; }
    .sep { width: 1px; height: 18px; background: #393939; margin: 0 1px; }
  `];
  render() {
    const b = (i: string, t: string, c = "") => html`<button class=${c} aria-label=${t}>${icon(i)}</button>`;
    return html`
      <div class="sheets">
        <button class="sheet on">模型</button><button class="sheet">布局1</button><span class="gap"></span><button class="sheet">布局2</button><button class="add" aria-label="新建布局">${icon("plus")}</button>
      </div>
      <div class="tools">
        <button class="label">模型</button>${b("grid", "栅格", "lit")}${b("dots", "捕捉")}${b("caret", "捕捉菜单", "thin")}<span class="sep"></span>
        ${b("ortho", "正交")}${b("polar", "极轴")}${b("caret", "极轴菜单", "thin")}${b("iso", "等轴测")}${b("caret", "等轴测菜单", "thin")}<span class="sep"></span>
        ${b("angle", "追踪")}${b("osnap", "对象捕捉")}${b("caret", "对象捕捉菜单", "thin")}<span class="sep"></span>${b("star", "注释可见性", "lit")}
      </div>`;
  }
}

@customElement("app-root")
class AppRoot extends LitElement {
  static styles = [base, css`
    :host { display: flex; flex-direction: column; min-height: 100vh; position: relative; overflow: hidden; background: #383838; font: 9px/12px "Open Sans", "Noto Sans CJK SC", sans-serif; }
    .files { display: flex; align-items: flex-end; height: 20px; padding-left: 13px; background: #383838; color: #aaa; }
    .file { height: 18px; width: 94px; padding: 0 10px; justify-content: flex-start; background: linear-gradient(#545454, #474747); clip-path: polygon(6px 0, 100% 0, 100% 100%, 0 100%); border-radius: 0 4px 0 0; }
    .cur { width: 93px; background: linear-gradient(#7a7a7a, #585858); color: #f2f2f2; clip-path: polygon(0 0, 88px 0, 100% 100%, 0 100%); padding: 0 13px 0 7px; justify-content: space-between; }
    .cur .ico { color: #3a3a3a; }
    .add { width: 16px; height: 14px; margin: 0 0 2px 1px; background: #505050; border-radius: 4px; }
    .task { height: 3px; background: linear-gradient(90deg, #9fb3c9 0 88px, #e6edf4 89px 205px, #8fa6bf 206px 100%); }
    .arrow { position: absolute; left: 80px; top: 30px; pointer-events: none; }
    .ball { position: absolute; right: -16px; bottom: 86px; width: 31px; height: 31px; border-radius: 50%; background: linear-gradient(#55d468, #23a540); border: 2px solid #e2f3e4; color: #fff; font-weight: bold; padding-left: 2px; line-height: 27px; }
    .mark { position: absolute; right: 142px; bottom: 20px; width: 91px; color: #fff; opacity: .72; font-family: "Liberation Sans", sans-serif; }
    .paws { position: absolute; right: 127px; bottom: 84px; opacity: .72; }
    .b1 { font-size: 41px; line-height: 36px; font-weight: bold; }
    .b2 { font-size: 24px; line-height: 28px; }
    .brand { position: absolute; right: 0; bottom: 0; width: 200px; height: 95px; display: flex; background: #232f55; color: #dcdcdc; padding: 9px 0 0 5px; white-space: nowrap; }
    .words { padding-top: 9px; }
    .cn { font: 500 29px/34px "Noto Sans CJK SC", sans-serif; }
    .en { font: 22px/28px "DejaVu Sans", sans-serif; }
  `];
  render() {
    return html`
      <title-bar></title-bar>
      <cad-ribbon></cad-ribbon>
      <div class="files">
        <button class="file">开始</button><button class="file cur">Drawing2*${icon("cross")}</button><button class="add" aria-label="新图形">${icon("plus")}</button>
      </div>
      <drawing-view></drawing-view>
      <command-line></command-line>
      <status-strip></status-strip>
      <div class="task"></div>
      <svg class="arrow" width="44" height="276" viewBox="0 0 44 276">
        <path d="M8 271L30.500 22" stroke="#f20000" stroke-width="2.400"/><path d="M32 4l-7 20 5.500-2 6 3z" fill="#f20000"/>
      </svg>
      <svg class="paws" width="32" height="22" viewBox="0 0 32 22"><ellipse cx="7" cy="9" rx="6" ry="8" fill="#fff"/><ellipse cx="23" cy="11" rx="7" ry="8" fill="#fff"/></svg>
      <div class="mark"><div class="b1">Ba</div><div class="b2">jing</div></div>
      <div class="ball">78</div>
      <div class="brand">
        <svg class="ico" width="59" height="75" viewBox="0 0 177 225">
          <path d="M28 49L40 56 58 54 66 60 74 70 72 75 58 77C52 86 50 92 56 102 66 109 88 105 108 109 124 112 133 122 137 134 140 147 134 157 131 166L134 178 131 201H119L123 181 110 164 102 151C88 157 70 156 59 152L54 176 55 201H42L46 176 41 148C28 138 20 122 22 103 24 90 34 82 37 70L35 61Z" fill="#d2d2d2"/>
          <path d="M61 56Q58 48 62 35M57 48L56 42M64 54Q72 46 69 33M70 48L79 37M66 55Q82 42 99 48 123 52 150 38M80 46Q82 38 82 32M98 47Q91 42 92 31M117 49L106 38M132 45L121 38M94 50Q110 61 126 51" fill="none" stroke="#d2d2d2" stroke-width="4"/>
        </svg>
        <div class="words"><div class="cn">3D溜溜网</div><div class="en">3D66.COM</div></div>
      </div>`;
  }
}
